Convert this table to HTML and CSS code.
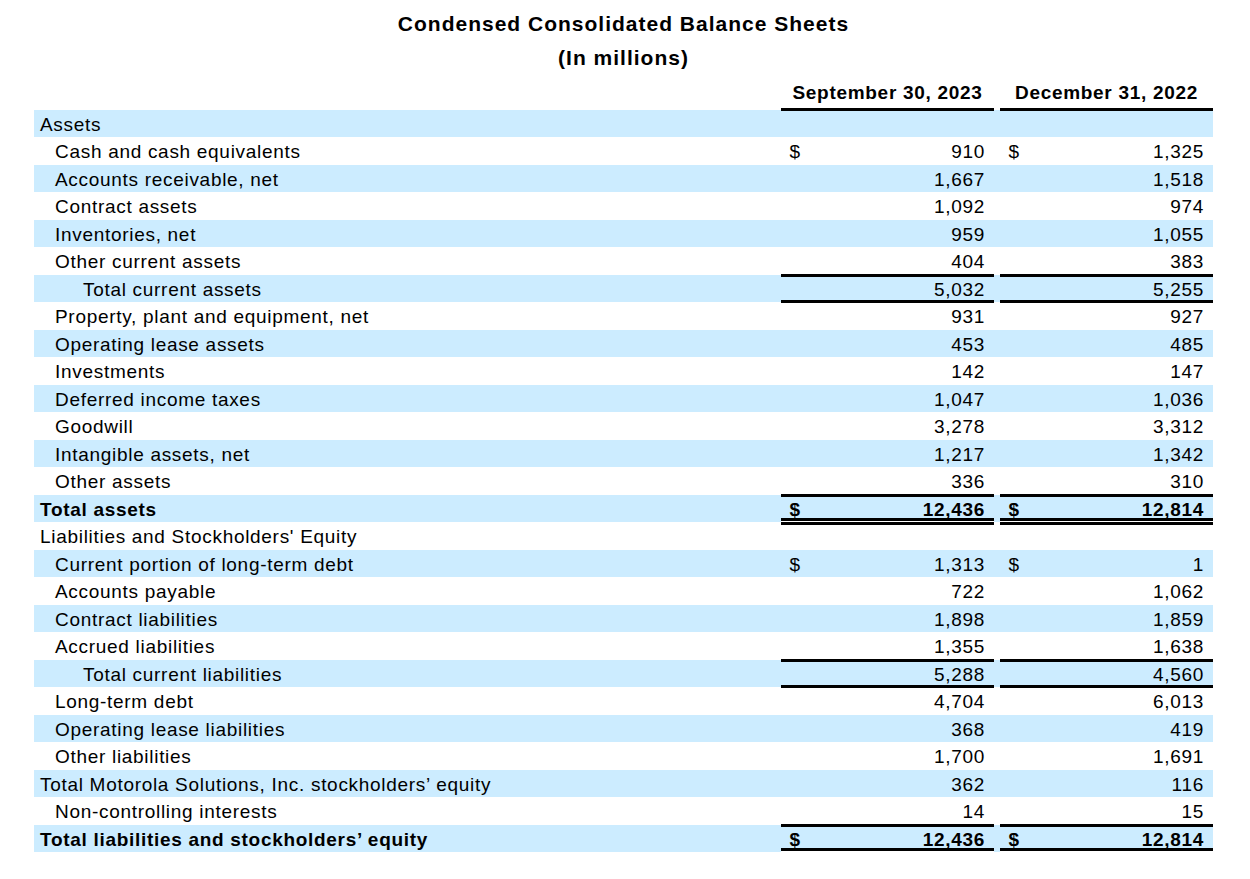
FILE: index.html
```html
<!DOCTYPE html>
<html lang="en">
<head>
<meta charset="utf-8">
<title>Condensed Consolidated Balance Sheets</title>
<link rel="stylesheet" href="styles.css">
</head>
<body>
<div class="sheet">
  <div class="title">
    <div>Condensed Consolidated Balance Sheets</div>
    <div>(In millions)</div>
  </div>

  <div class="row head">
    <div></div>
    <div class="h rb">September 30, 2023</div>
    <div class="h rb">December 31, 2022</div>
  </div>

  <div class="row alt"><div class="l0">Assets</div><div></div><div></div></div>
  <div class="row"><div class="l1">Cash and cash equivalents</div><div class="v"><span>$</span><span>910</span></div><div class="v"><span>$</span><span>1,325</span></div></div>
  <div class="row alt"><div class="l1">Accounts receivable, net</div><div class="v n">1,667</div><div class="v n">1,518</div></div>
  <div class="row"><div class="l1">Contract assets</div><div class="v n">1,092</div><div class="v n">974</div></div>
  <div class="row alt"><div class="l1">Inventories, net</div><div class="v n">959</div><div class="v n">1,055</div></div>
  <div class="row"><div class="l1">Other current assets</div><div class="v n">404</div><div class="v n">383</div></div>
  <div class="row alt"><div class="l2">Total current assets</div><div class="v n rtb">5,032</div><div class="v n rtb">5,255</div></div>
  <div class="row"><div class="l1">Property, plant and equipment, net</div><div class="v n">931</div><div class="v n">927</div></div>
  <div class="row alt"><div class="l1">Operating lease assets</div><div class="v n">453</div><div class="v n">485</div></div>
  <div class="row"><div class="l1">Investments</div><div class="v n">142</div><div class="v n">147</div></div>
  <div class="row alt"><div class="l1">Deferred income taxes</div><div class="v n">1,047</div><div class="v n">1,036</div></div>
  <div class="row"><div class="l1">Goodwill</div><div class="v n">3,278</div><div class="v n">3,312</div></div>
  <div class="row alt"><div class="l1">Intangible assets, net</div><div class="v n">1,217</div><div class="v n">1,342</div></div>
  <div class="row"><div class="l1">Other assets</div><div class="v n">336</div><div class="v n">310</div></div>
  <div class="row alt total"><div class="l0">Total assets</div><div class="v rtd"><span>$</span><span>12,436</span></div><div class="v rtd"><span>$</span><span>12,814</span></div></div>
  <div class="row"><div class="l0">Liabilities and Stockholders' Equity</div><div></div><div></div></div>
  <div class="row alt"><div class="l1">Current portion of long-term debt</div><div class="v"><span>$</span><span>1,313</span></div><div class="v"><span>$</span><span>1</span></div></div>
  <div class="row"><div class="l1">Accounts payable</div><div class="v n">722</div><div class="v n">1,062</div></div>
  <div class="row alt"><div class="l1">Contract liabilities</div><div class="v n">1,898</div><div class="v n">1,859</div></div>
  <div class="row"><div class="l1">Accrued liabilities</div><div class="v n">1,355</div><div class="v n">1,638</div></div>
  <div class="row alt"><div class="l2">Total current liabilities</div><div class="v n rtb">5,288</div><div class="v n rtb">4,560</div></div>
  <div class="row"><div class="l1">Long-term debt</div><div class="v n">4,704</div><div class="v n">6,013</div></div>
  <div class="row alt"><div class="l1">Operating lease liabilities</div><div class="v n">368</div><div class="v n">419</div></div>
  <div class="row"><div class="l1">Other liabilities</div><div class="v n">1,700</div><div class="v n">1,691</div></div>
  <div class="row alt"><div class="l0">Total Motorola Solutions, Inc. stockholders’ equity</div><div class="v n">362</div><div class="v n">116</div></div>
  <div class="row"><div class="l1">Non-controlling interests</div><div class="v n">14</div><div class="v n">15</div></div>
  <div class="row alt total"><div class="l0">Total liabilities and stockholders’ equity</div><div class="v rtd"><span>$</span><span>12,436</span></div><div class="v rtd"><span>$</span><span>12,814</span></div></div>
</div>
</body>
</html>
```

FILE: styles.css
```css
html, body {
  margin: 0;
  padding: 0;
  background: #ffffff;
}

body {
  font-family: "Liberation Sans", Arial, sans-serif;
  color: #000000;
}

.sheet {
  width: 1179px;
  margin-left: 34px;
  padding-top: 7px;
  font-size: 19px;
  letter-spacing: 0.7px;
}

.title {
  text-align: center;
  font-weight: bold;
  font-size: 21px;
  line-height: 34px;
  letter-spacing: 1px;
}

.row {
  display: grid;
  grid-template-columns: 741px 213px 213px;
  grid-template-rows: 27.5px;
  column-gap: 6px;
}

.row > div {
  box-sizing: border-box;
  padding-top: 3px;
  line-height: 24.5px;
  white-space: nowrap;
}

.row.head {
  grid-template-rows: 34.5px;
}

.row.head > div {
  padding-top: 6px;
}

.h {
  font-weight: bold;
  text-align: center;
}

.alt {
  background: #ccecff;
}

.total {
  font-weight: bold;
}

.l0 { padding-left: 6px; }
.l1 { padding-left: 21px; }
.l2 { padding-left: 49px; }

.v {
  display: flex;
  justify-content: space-between;
  padding-left: 8.5px;
  padding-right: 9px;
}

.v.n {
  justify-content: flex-end;
}

/* single rule under a cell (header) */
.rb {
  box-shadow: 0 1px 0 #000;
  background: linear-gradient(#000, #000) bottom / 100% 2px no-repeat;
}

/* single rule above and below a subtotal */
.rtb {
  box-shadow: 0 -1px 0 #000, 0 1px 0 #000;
  background:
    linear-gradient(#000, #000) top / 100% 2px no-repeat,
    linear-gradient(#000, #000) bottom / 100% 2px no-repeat;
}

/* rule above and double rule below a grand total */
.rtd {
  box-shadow: 0 -1px 0 #000, 0 3px 0 #000;
  background:
    linear-gradient(#000, #000) top / 100% 2px no-repeat,
    linear-gradient(#000 0 3px, #fff 3px 4px) bottom / 100% 4px no-repeat;
}
```
